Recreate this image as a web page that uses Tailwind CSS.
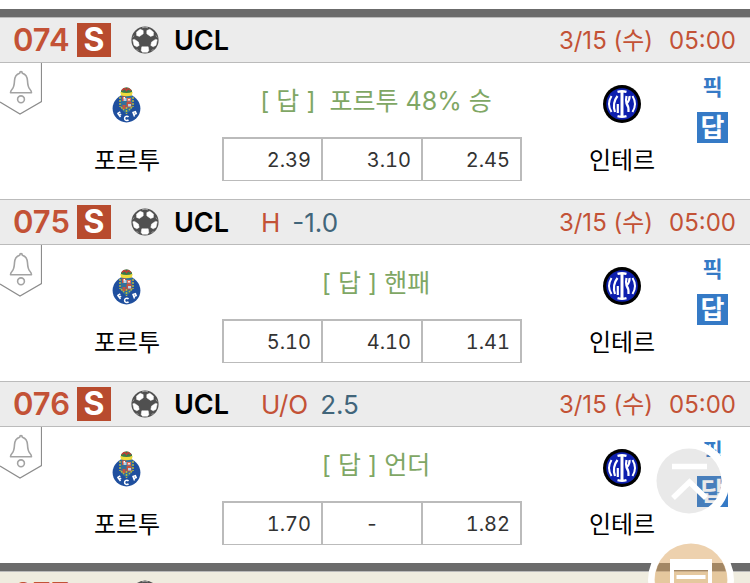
<!DOCTYPE html>
<html lang="ko">
<head>
<meta charset="utf-8">
<meta name="viewport" content="width=device-width, initial-scale=1">
<title>UCL</title>
<script src="https://cdn.jsdelivr.net/npm/@tailwindcss/browser@4"></script>
</head>
<body class="bg-white font-['Inter','Noto_Sans_CJK_KR',sans-serif] text-black">
<svg class="hidden" aria-hidden="true">
  <symbol id="ball" viewBox="0 0 28 28">
    <circle cx="14" cy="14" r="13.6" fill="#505050"/>
    <g fill="#fff" stroke="#fff" stroke-width=".5" stroke-linejoin="round">
      <path d="M5.600 6 9.200 3.300 12.200 4.600 12.200 7.800 8.400 10.400 5.600 9.400Z"/>
      <path d="M22.400 6 18.800 3.300 15.800 4.600 15.800 7.800 19.600 10.400 22.400 9.400Z"/>
      <path d="M1.800 13.800 3.600 13.400 7.400 16 8.200 19.400 5.800 20.800 3 19.200Z"/>
      <path d="M26.200 13.800 24.400 13.400 20.600 16 19.800 19.400 22.200 20.800 25 19.200Z"/>
      <path d="M10.800 20.800 17.200 20.800 17.800 24.400 16.600 26.200 11.400 26.200 10.200 24.400Z"/>
    </g>
    <path d="M11 1.800q3-1.300 6 0M3 9.500l-1.300 2M25 9.500l1.300 2M5.500 23l2 2M22.500 23l-2 2" stroke="#9a9a9a" stroke-width="1" fill="none"/>
  </symbol>
  <symbol id="ribbon" viewBox="0 0 42 52">
    <path d="M0 39 20 51 41.500 38.500V0" fill="none" stroke="#8c8c8c" stroke-width="1.200"/>
    <path d="M21 8.600c-.9 0-1.300.7-1.300 1.600-3.600 1-5 3.800-5.200 7.600-.2 4.600-.6 6.600-2.400 8.400-1 1-1.600 1.800-1.600 3.600h21c0-1.800-.6-2.600-1.600-3.600-1.800-1.800-2.200-3.800-2.400-8.400-.2-3.800-1.600-6.600-5.200-7.600 0-.9-.4-1.600-1.300-1.600Z" fill="none" stroke="#a3a3a3" stroke-width="1.600" stroke-linejoin="round"/>
    <circle cx="21" cy="36.300" r="3.400" fill="none" stroke="#a3a3a3" stroke-width="1.600"/>
  </symbol>
  <symbol id="porto" viewBox="0 0 38 38">
    <circle cx="18.500" cy="23.500" r="13.900" fill="#1f4f9e"/>
    <path d="M12.500 10.500h12V20q-.5 6-6 8.500-5.500-2.500-6-8.500Z" fill="#33719a"/>
    <path d="M14 11.500h4v4.500h-4zM18.500 17h5v5.500h-5zM14.500 20h3v4h-3z" fill="#c8513f"/>
    <path d="M15.500 13h3v3h-3zM20 19h3v2.500h-3z" fill="#b7d3e6"/>
    <path d="M12 12v10M25 12v10M18.500 22v7M13 22l3 3M24 22l-3 3" stroke="#b9b83a" stroke-width="1.500" stroke-dasharray="2 1"/>
    <path d="M19 13h4v3.500h-4z" fill="#e26a55"/><path d="M20.200 14h1.600v1.500h-1.600zM15.500 12h1.500v1.500h-1.500z" fill="#fff"/>
    <path d="M13 5.500Q18.500-1 24 5.500V8H13Z" fill="#397b4b"/>
    <path d="M14 5.500q1.500-2 3-2l1.500 2 1.500-2 3 2" fill="none" stroke="#c23d35" stroke-width="1.400"/>
    <path d="M12.300 6.800q6.200 2.500 12.400 0l-.8 3.600q-5.400 1.500-10.800 0Z" fill="#eedb3c"/>
    <g fill="none" stroke="#fff" stroke-width="1.500"><path d="M9.500 28l3 4M9.700 28.300l2.600-1.300M11 30.300l2.200-1M20.500 32a2.200 2.200 0 1 0 0 2.800M26.500 31.500l-1.500-4 2.400-.9 .8 2-2.400 .9"/></g>
  </symbol>
  <symbol id="inter" viewBox="0 0 38 38">
    <circle cx="19" cy="19" r="19" fill="#000"/>
    <circle cx="19" cy="19" r="15.800" fill="#0d1fae"/>
    <g fill="none" stroke="#fff">
      <path d="M19 6.500v25" stroke-width="3"/>
      <path d="M14.500 6.800q4.500-1.200 9 0M14.500 31.200q4.500 1.200 9 0" stroke-width="2.400"/>
      <path d="M8.500 11q-5 8 0 16M29.500 11q5 8 0 16" stroke-width="2"/>
      <path d="M14.500 11q-5.500 7-2.500 16M23.500 11q-1 5 0 7.500 2.500 3.500 2 8.500M14.800 28V19M26.500 11q.5 4-3 8" stroke-width="2.200"/>
    </g>
  </symbol>
</svg>

<main class="h-screen overflow-hidden pt-[9px]">
  <section id="matches" class="border-t-8 border-[#6b6b6b]"></section>
  <section class="border-t-8 border-[#6b6b6b]">
    <header class="flex h-[46px] items-center border-y border-[#bbb] bg-[#efecdf] pl-[13px]">
      <span class="w-[118px] text-[31px] font-semibold text-[#c35236]">077</span>
      <svg class="size-7"><use href="#ball"/></svg>
    </header>
  </section>
</main>

<button class="fixed right-[21px] bottom-[62px] size-20" aria-label="맨 위로">
  <svg class="size-20" viewBox="0 0 80 80" fill="none">
    <circle cx="40" cy="40" r="36.500" stroke="#fff" stroke-width="8"/>
    <circle cx="40" cy="40" r="32.500" fill="#919191" fill-opacity=".2"/>
    <path d="M23 25.500h35M24 57 40.500 41 57 57" stroke="#fff" stroke-width="5.500"/>
  </svg>
</button>
<button class="fixed right-4 -bottom-10 size-[86px]" aria-label="목록">
  <svg class="size-[86px]" viewBox="0 0 86 86" fill="none">
    <circle cx="43" cy="43" r="39.500" stroke="#fff" stroke-width="7"/>
    <circle cx="43" cy="43" r="36.500" fill="#dca35e" fill-opacity=".5"/>
    <path fill-rule="evenodd" d="M22 22h42v42H22ZM26 33v27h34V33Z" fill="#fff"/>
    <path d="M28.500 40h29M28.500 50h29" stroke="#fff" stroke-width="4"/>
  </svg>
</button>

<script>
const matches = [
  { no: '074', league: 'UCL', pick: '[ 답 ]  포르투 48% 승', odds: ['2.39', '3.10', '2.45'] },
  { no: '075', league: 'UCL', kind: 'H', line: '-1.0', pick: '[ 답 ] 핸패', odds: ['5.10', '4.10', '1.41'] },
  { no: '076', league: 'UCL', kind: 'U/O', line: '2.5', pick: '[ 답 ] 언더', odds: ['1.70', '-', '1.82'] },
];
document.getElementById('matches').innerHTML = matches.map(m => `
  <article>
    <header class="flex h-[46px] items-center border-y border-[#bbb] bg-[#ececec] pl-[13px] pr-[14px]">
      <div class="flex w-[161px] items-center">
        <span class="w-16 text-[31px] font-semibold text-[#c35236]">${m.no}</span>
        <span class="grid size-[34px] place-items-center bg-[#b84b2e] text-[32px] leading-none font-bold text-white">S</span>
        <svg class="ml-5 size-7"><use href="#ball"/></svg>
      </div>
      <h2 class="w-[87px] pt-0.5 text-[27px] font-semibold">${m.league}</h2>
      ${m.kind ? `<p class="flex gap-3 text-[26px] text-[#41657a]"><span class="text-[#c35236]">${m.kind}</span><span>${m.line}</span></p>` : ''}
      <time class="ml-auto flex gap-4 pt-0.5 text-2xl text-[#c35236]"><span>3/15 (수)</span><span>05:00</span></time>
    </header>
    <div class="relative grid h-[136px] grid-cols-[32px_190px_minmax(0,1fr)_150px_53px]">
      <button class="absolute top-0 left-0" aria-label="알림"><svg class="h-[52px] w-[42px]"><use href="#ribbon"/></svg></button>
      <div class="col-start-2 flex flex-col items-center pt-[22px]">
        <svg class="size-[38px]"><use href="#porto"/></svg>
        <span class="mt-[22px] text-2xl leading-8">포르투</span>
      </div>
      <div class="pr-[25px] pt-5">
        <p class="mb-[18px] pl-2 text-center text-[25px] leading-9 whitespace-pre text-[#7fa765]">${m.pick}</p>
        <table class="h-11 w-full table-fixed border-separate border-spacing-0 border-2 border-b border-[#bbb] text-right text-xl tabular-nums text-[#333]" aria-label="배당">
          <tbody><tr>${m.odds.map((o, i) => `<td class="${o === '-' ? 'text-center' : 'pr-[10px]'} ${i === 1 ? 'w-[102px] border-x-2 border-[#bbb]' : ''}">${o}</td>`).join('')}</tr></tbody>
        </table>
      </div>
      <div class="flex flex-col items-center pt-[22px]">
        <svg class="size-[38px]"><use href="#inter"/></svg>
        <span class="mt-[22px] text-2xl leading-8">인테르</span>
      </div>
      <div class="flex w-[31px] flex-col items-center pt-2 text-[#357ac6]">
        <a href="#" class="mb-[9px] text-[22px] leading-8 font-bold">픽</a>
        <a href="#" class="grid size-[31px] place-items-center bg-[#357ac6] text-[26px] leading-none font-bold text-white">답</a>
      </div>
    </div>
  </article>`).join('');
</script>
</body>
</html>
